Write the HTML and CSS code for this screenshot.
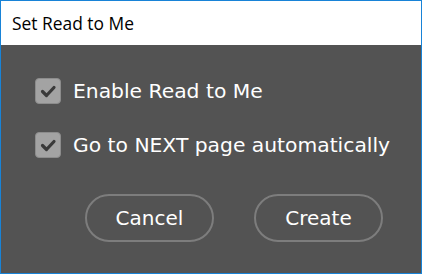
FILE: index.html
```html
<!DOCTYPE html>
<html>
<head>
<meta charset="utf-8">
<link rel="stylesheet" href="styles.css">
</head>
<body>
<div class="window">
  <div class="titlebar">Set Read to Me</div>
  <div class="content">
    <div class="options">
      <label class="option"><span class="box"><svg viewBox="0 0 26 26" width="26" height="26"><path d="M7.5 13.5 L11.5 17.5 L19 9.5" fill="none" stroke="#3a3a3a" stroke-width="3.2" stroke-linecap="round" stroke-linejoin="round"/></svg></span><span class="label">Enable Read to Me</span></label>
      <label class="option"><span class="box"><svg viewBox="0 0 26 26" width="26" height="26"><path d="M7.5 13.5 L11.5 17.5 L19 9.5" fill="none" stroke="#3a3a3a" stroke-width="3.2" stroke-linecap="round" stroke-linejoin="round"/></svg></span><span class="label">Go to NEXT page automatically</span></label>
    </div>
    <div class="buttons">
      <button class="btn">Cancel</button>
      <button class="btn">Create</button>
    </div>
  </div>
</div>
</body>
</html>
```
FILE: styles.css
```css
html, body { margin: 0; padding: 0; }
body { width: 422px; height: 274px; overflow: hidden; }
.window {
  box-sizing: border-box;
  width: 422px; height: 274px;
  border: 1px solid #1883d7;
  display: flex; flex-direction: column;
  background: #535353;
}
.titlebar {
  height: 44px;
  background: #fff;
  color: #000;
  font-family: "Open Sans", "Noto Sans", sans-serif;
  font-size: 17.4px;
  line-height: 44px;
  padding-left: 11px;
  flex: none;
}
.content {
  flex: 1;
  display: flex; flex-direction: column;
}
.options {
  display: flex; flex-direction: column;
  gap: 28px;
  padding: 33px 0 0 34px;
}
.option {
  display: flex; align-items: center;
  height: 26px;
  gap: 12px;
}
.box {
  width: 26px; height: 26px;
  box-sizing: border-box;
  background: #a3a3a3;
  border: 1px solid #8c8c8c;
  border-radius: 4px;
  display: flex;
}
.box svg { margin: -1px; }
.label {
  color: #fff;
  font-family: "DejaVu Sans", Verdana, sans-serif;
  font-size: 20.3px;
  white-space: nowrap;
}
.buttons {
  display: flex;
  gap: 40px;
  padding: 36px 0 0 84px;
}
.btn {
  width: 129px; height: 48px;
  box-sizing: border-box;
  border: 2px solid #7d7d7d;
  border-radius: 24px;
  background: transparent;
  color: #fff;
  font-family: "DejaVu Sans", Verdana, sans-serif;
  font-size: 20px;
  padding: 0;
}
```
